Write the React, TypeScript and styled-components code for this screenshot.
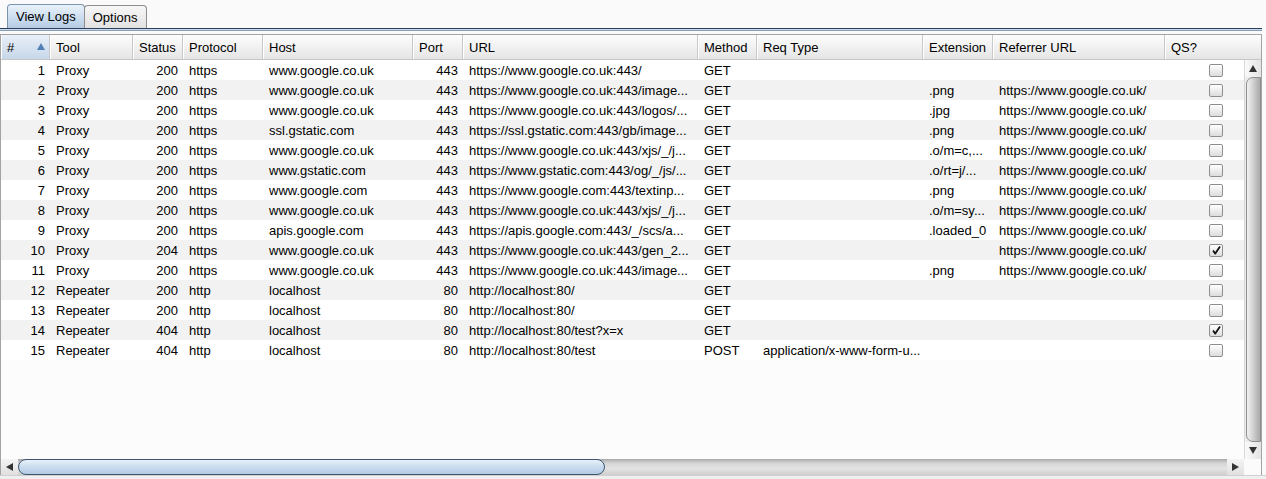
import React from 'react';
import styled, { createGlobalStyle } from 'styled-components';

interface LogRow {
  id: number;
  tool: string;
  status: number;
  protocol: string;
  host: string;
  port: number;
  url: string;
  method: string;
  reqType: string;
  extension: string;
  referrer: string;
  qs: boolean;
}

const GlobalStyle = createGlobalStyle`
  html, body {
    margin: 0;
    padding: 0;
    background: #f4f4f4;
  }
  body {
    font-family: "Liberation Sans", Arial, sans-serif;
    font-size: 13px;
    color: #000;
  }
`;

// first column is 1px narrower because the frame's left border takes that pixel
const widths = [49, 83, 50, 80, 150, 50, 235, 59, 166, 70, 172, 80];

const Page = styled.div`
  width: 1266px;
  height: 479px;
  display: flex;
  flex-direction: column;
  background: #fafafa;
  overflow: hidden;
`;

const TabBar = styled.div`
  display: flex;
  align-items: flex-end;
  height: 28px;
  padding-left: 7px;
`;

const Tab = styled.div<{ $active?: boolean }>`
  height: ${(p) => (p.$active ? 24 : 23)}px;
  padding: 0 8px;
  display: flex;
  align-items: center;
  box-sizing: border-box;
  border: 1px solid ${(p) => (p.$active ? '#7d93ad' : '#8d8d8d')};
  border-bottom: none;
  border-radius: 4px 4px 0 0;
  background: ${(p) =>
    p.$active
      ? 'linear-gradient(#eaf2fb, #c9dbee 60%, #b6cce3)'
      : 'linear-gradient(#f7f7f7, #e2e2e2)'};
  margin-right: -1px;
  font-size: 13px;
`;

const TabRule = styled.div`
  height: 1px;
  border-top: 1px solid #2f3f55;
  border-bottom: 1px solid #8aa0b8;
  background: #c8daee;
  margin-right: 4px;
`;

const Frame = styled.div`
  margin-top: 3px;
  width: 1262px;
  box-sizing: border-box;
  border: 1px solid #a3a3a3;
  border-bottom: none;
  display: flex;
  flex-direction: column;
  background: #fcfcfc;
`;

const HeaderRow = styled.div`
  display: grid;
  grid-template-columns: ${widths.slice(0, 11).map((w) => `${w}px`).join(' ')} 1fr;
  height: 25px;
  box-sizing: border-box;
  border-bottom: 1px solid #c6c6c6;
`;

const HeaderCell = styled.div<{ $sorted?: boolean }>`
  position: relative;
  display: flex;
  align-items: center;
  padding-left: 6px;
  box-sizing: border-box;
  border-right: 1px solid #c9c9c9;
  box-shadow: inset 1px 0 0 #ffffff;
  background: ${(p) =>
    p.$sorted ? 'linear-gradient(#e9f0f8, #c6d7e9)' : 'linear-gradient(#fdfdfd, #e5e5e5)'};
  white-space: nowrap;
  overflow: hidden;
  &:last-child {
    border-right: none;
  }
`;

const SortArrow = styled.span`
  position: absolute;
  right: 4px;
  top: 8px;
  width: 0;
  height: 0;
  border-left: 4px solid transparent;
  border-right: 4px solid transparent;
  border-bottom: 7px solid #4f80b6;
`;

const BodyArea = styled.div`
  display: flex;
  height: 399px;
`;

const Viewport = styled.div`
  flex: 1;
  overflow: hidden;
`;

const Row = styled.div<{ $odd: boolean }>`
  display: grid;
  grid-template-columns: ${widths.map((w) => `${w}px`).join(' ')};
  height: 20px;
  background: ${(p) => (p.$odd ? '#ffffff' : '#f2f2f2')};
`;

const Cell = styled.div<{ $right?: boolean }>`
  display: flex;
  align-items: center;
  justify-content: ${(p) => (p.$right ? 'flex-end' : 'flex-start')};
  padding: ${(p) => (p.$right ? '0 5px' : '0 5px 0 6px')};
  white-space: nowrap;
  overflow: hidden;
`;

const CheckCell = styled.div`
  display: flex;
  align-items: center;
  padding-left: 44px;
`;

const CheckBox = styled.span`
  width: 14px;
  height: 13px;
  box-sizing: border-box;
  border: 1px solid #8e8f8f;
  border-radius: 2px;
  background: linear-gradient(#ffffff, #dcdcdc);
  display: flex;
  align-items: center;
  justify-content: center;
`;

const VScroll = styled.div`
  width: 17px;
  display: flex;
  flex-direction: column;
  background: #ececec;
  border-left: 1px solid #d8d8d8;
  box-sizing: border-box;
`;

const ArrowButton = styled.div`
  flex: 0 0 17px;
  height: 17px;
  display: flex;
  align-items: center;
  justify-content: center;
  background: linear-gradient(to right, #fafafa, #e4e4e4);
`;

const Arrow = styled.span<{ $dir: 'up' | 'down' | 'left' | 'right' }>`
  width: 0;
  height: 0;
  border: 4px solid transparent;
  ${(p) =>
    p.$dir === 'up'
      ? 'border-bottom: 7px solid #333; border-top: none;'
      : p.$dir === 'down'
      ? 'border-top: 7px solid #333; border-bottom: none;'
      : p.$dir === 'left'
      ? 'border-right: 7px solid #333; border-left: none;'
      : 'border-left: 7px solid #333; border-right: none;'}
`;

const VThumb = styled.div`
  flex: 1;
  margin: 0 0 0 1px;
  border: 1px solid #8f8f8f;
  border-radius: 7px 0 0 7px;
  background: linear-gradient(to right, #f2f2f2, #d2d2d2 45%, #a9a9a9);
`;

const BottomRow = styled.div`
  display: flex;
  height: 16px;
`;

const HScroll = styled.div`
  flex: 1;
  display: flex;
  background: linear-gradient(#a8a8a8, #d4d4d4 25%, #e3e3e3 60%, #cfcfcf);
`;

const HButton = styled.div`
  flex: 0 0 17px;
  display: flex;
  align-items: center;
  justify-content: center;
  background: linear-gradient(#f4f4f4, #e0e0e0);
`;

const HThumb = styled.div`
  width: 587px;
  box-sizing: border-box;
  border: 1px solid #3d5670;
  border-radius: 8px;
  background: linear-gradient(#e9f1f9, #c9dcef 50%, #b3cbe3);
`;

const HTrack = styled.div`
  flex: 1;
`;

const Corner = styled.div`
  width: 17px;
  background: #fbfbfb;
`;

const Footer = styled.div`
  flex: 1;
  background: #f0f0f0;
  border-top: 1px solid #d0d0d0;
`;

const google = 'https://www.google.co.uk/';

const rows: LogRow[] = [
  { id: 1, tool: 'Proxy', status: 200, protocol: 'https', host: 'www.google.co.uk', port: 443, url: 'https://www.google.co.uk:443/', method: 'GET', reqType: '', extension: '', referrer: '', qs: false },
  { id: 2, tool: 'Proxy', status: 200, protocol: 'https', host: 'www.google.co.uk', port: 443, url: 'https://www.google.co.uk:443/image...', method: 'GET', reqType: '', extension: '.png', referrer: google, qs: false },
  { id: 3, tool: 'Proxy', status: 200, protocol: 'https', host: 'www.google.co.uk', port: 443, url: 'https://www.google.co.uk:443/logos/...', method: 'GET', reqType: '', extension: '.jpg', referrer: google, qs: false },
  { id: 4, tool: 'Proxy', status: 200, protocol: 'https', host: 'ssl.gstatic.com', port: 443, url: 'https://ssl.gstatic.com:443/gb/image...', method: 'GET', reqType: '', extension: '.png', referrer: google, qs: false },
  { id: 5, tool: 'Proxy', status: 200, protocol: 'https', host: 'www.google.co.uk', port: 443, url: 'https://www.google.co.uk:443/xjs/_/j...', method: 'GET', reqType: '', extension: '.o/m=c,...', referrer: google, qs: false },
  { id: 6, tool: 'Proxy', status: 200, protocol: 'https', host: 'www.gstatic.com', port: 443, url: 'https://www.gstatic.com:443/og/_/js/...', method: 'GET', reqType: '', extension: '.o/rt=j/...', referrer: google, qs: false },
  { id: 7, tool: 'Proxy', status: 200, protocol: 'https', host: 'www.google.com', port: 443, url: 'https://www.google.com:443/textinp...', method: 'GET', reqType: '', extension: '.png', referrer: google, qs: false },
  { id: 8, tool: 'Proxy', status: 200, protocol: 'https', host: 'www.google.co.uk', port: 443, url: 'https://www.google.co.uk:443/xjs/_/j...', method: 'GET', reqType: '', extension: '.o/m=sy...', referrer: google, qs: false },
  { id: 9, tool: 'Proxy', status: 200, protocol: 'https', host: 'apis.google.com', port: 443, url: 'https://apis.google.com:443/_/scs/a...', method: 'GET', reqType: '', extension: '.loaded_0', referrer: google, qs: false },
  { id: 10, tool: 'Proxy', status: 204, protocol: 'https', host: 'www.google.co.uk', port: 443, url: 'https://www.google.co.uk:443/gen_2...', method: 'GET', reqType: '', extension: '', referrer: google, qs: true },
  { id: 11, tool: 'Proxy', status: 200, protocol: 'https', host: 'www.google.co.uk', port: 443, url: 'https://www.google.co.uk:443/image...', method: 'GET', reqType: '', extension: '.png', referrer: google, qs: false },
  { id: 12, tool: 'Repeater', status: 200, protocol: 'http', host: 'localhost', port: 80, url: 'http://localhost:80/', method: 'GET', reqType: '', extension: '', referrer: '', qs: false },
  { id: 13, tool: 'Repeater', status: 200, protocol: 'http', host: 'localhost', port: 80, url: 'http://localhost:80/', method: 'GET', reqType: '', extension: '', referrer: '', qs: false },
  { id: 14, tool: 'Repeater', status: 404, protocol: 'http', host: 'localhost', port: 80, url: 'http://localhost:80/test?x=x', method: 'GET', reqType: '', extension: '', referrer: '', qs: true },
  { id: 15, tool: 'Repeater', status: 404, protocol: 'http', host: 'localhost', port: 80, url: 'http://localhost:80/test', method: 'POST', reqType: 'application/x-www-form-u...', extension: '', referrer: '', qs: false },
];

const headers = ['#', 'Tool', 'Status', 'Protocol', 'Host', 'Port', 'URL', 'Method', 'Req Type', 'Extension', 'Referrer URL', 'QS?'];

const Tick = () => (
  <svg width="11" height="11" viewBox="0 0 11 11">
    <path d="M2 5.5 L4.3 8.6 L9 1.5" fill="none" stroke="#111" strokeWidth="1.8" strokeLinejoin="round" />
  </svg>
);

const App: React.FC = () => {
  return (
    <Page>
      <GlobalStyle />
      <TabBar>
        <Tab $active>View Logs</Tab>
        <Tab>Options</Tab>
      </TabBar>
      <TabRule />
      <Frame>
        <HeaderRow>
          {headers.map((h, i) => (
            <HeaderCell key={h} $sorted={i === 0}>
              {h}
              {i === 0 && <SortArrow />}
            </HeaderCell>
          ))}
        </HeaderRow>
        <BodyArea>
          <Viewport>
            {rows.map((r) => (
              <Row key={r.id} $odd={r.id % 2 === 1}>
                <Cell $right>{r.id}</Cell>
                <Cell>{r.tool}</Cell>
                <Cell $right>{r.status}</Cell>
                <Cell>{r.protocol}</Cell>
                <Cell>{r.host}</Cell>
                <Cell $right>{r.port}</Cell>
                <Cell>{r.url}</Cell>
                <Cell>{r.method}</Cell>
                <Cell>{r.reqType}</Cell>
                <Cell>{r.extension}</Cell>
                <Cell>{r.referrer}</Cell>
                <CheckCell>
                  <CheckBox>{r.qs && <Tick />}</CheckBox>
                </CheckCell>
              </Row>
            ))}
          </Viewport>
          <VScroll>
            <ArrowButton>
              <Arrow $dir="up" />
            </ArrowButton>
            <VThumb />
            <ArrowButton>
              <Arrow $dir="down" />
            </ArrowButton>
          </VScroll>
        </BodyArea>
        <BottomRow>
          <HScroll>
            <HButton>
              <Arrow $dir="left" />
            </HButton>
            <HThumb />
            <HTrack />
            <HButton>
              <Arrow $dir="right" />
            </HButton>
          </HScroll>
          <Corner />
        </BottomRow>
      </Frame>
      <Footer />
    </Page>
  );
};

export default App;
